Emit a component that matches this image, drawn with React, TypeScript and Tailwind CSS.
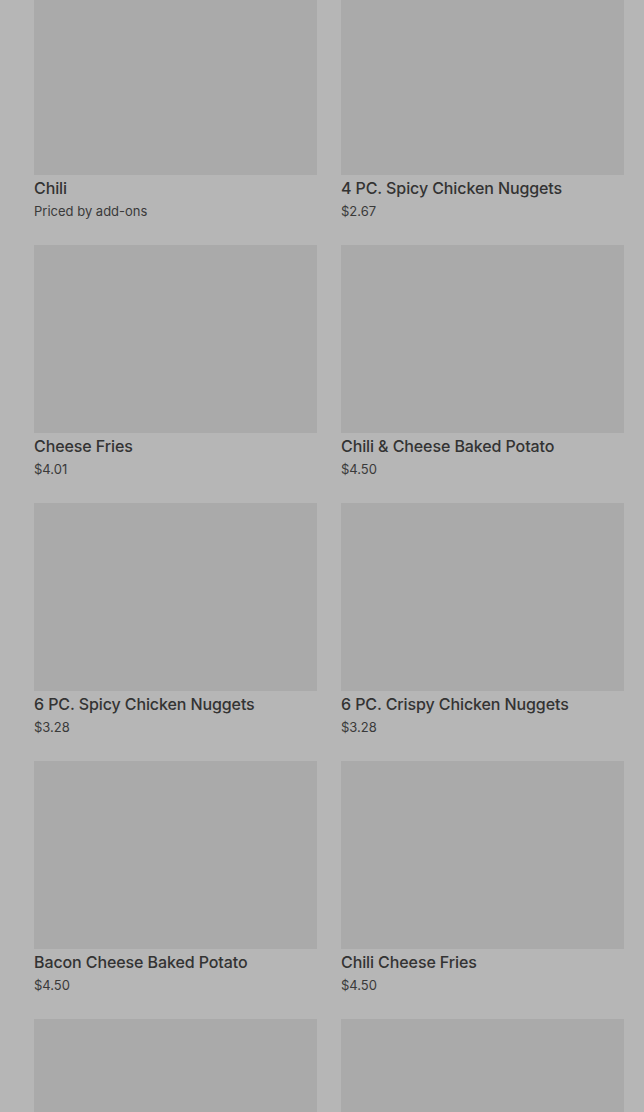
import React from 'react';

// Menu items grid, dimmed behind an overlay

interface MenuItem {
  name: string;
  price: string;
}

const items: MenuItem[] = [
  { name: 'Chili', price: 'Priced by add-ons' },
  { name: '4 PC. Spicy Chicken Nuggets', price: '$2.67' },
  { name: 'Cheese Fries', price: '$4.01' },
  { name: 'Chili & Cheese Baked Potato', price: '$4.50' },
  { name: '6 PC. Spicy Chicken Nuggets', price: '$3.28' },
  { name: '6 PC. Crispy Chicken Nuggets', price: '$3.28' },
  { name: 'Bacon Cheese Baked Potato', price: '$4.50' },
  { name: 'Chili Cheese Fries', price: '$4.50' },
  { name: 'Chili Cheese Fries', price: '$4.50' },
  { name: 'Chili Cheese Fries', price: '$4.50' },
];

function ItemCard({ item, hideText }: { item: MenuItem; hideText?: boolean }) {
  return (
    <div className="flex flex-col h-[258px]">
      {/* Image placeholder */}
      <div className="h-[188px] w-full bg-[#aaaaaa]" />
      {!hideText && (
        <>
          <div className="mt-[3px] text-[16px] leading-5 font-medium text-[#333333] tracking-[-0.1px]">
            {item.name}
          </div>
          <div className="mt-[4px] text-[13px] leading-[18px] text-[#3a3a3a]">
            {item.price}
          </div>
        </>
      )}
    </div>
  );
}

export default function App() {
  return (
    <div
      className="h-[1112px] w-[644px] overflow-hidden bg-[#b6b6b6]"
      style={{ fontFamily: 'Inter, "Noto Sans", sans-serif' }}
    >
      <div className="-mt-[13px] grid grid-cols-2 gap-x-6 pl-[34px] pr-[20px]">
        {items.map((item, i) => (
          <ItemCard key={i} item={item} hideText={i >= 8} />
        ))}
      </div>
    </div>
  );
}
